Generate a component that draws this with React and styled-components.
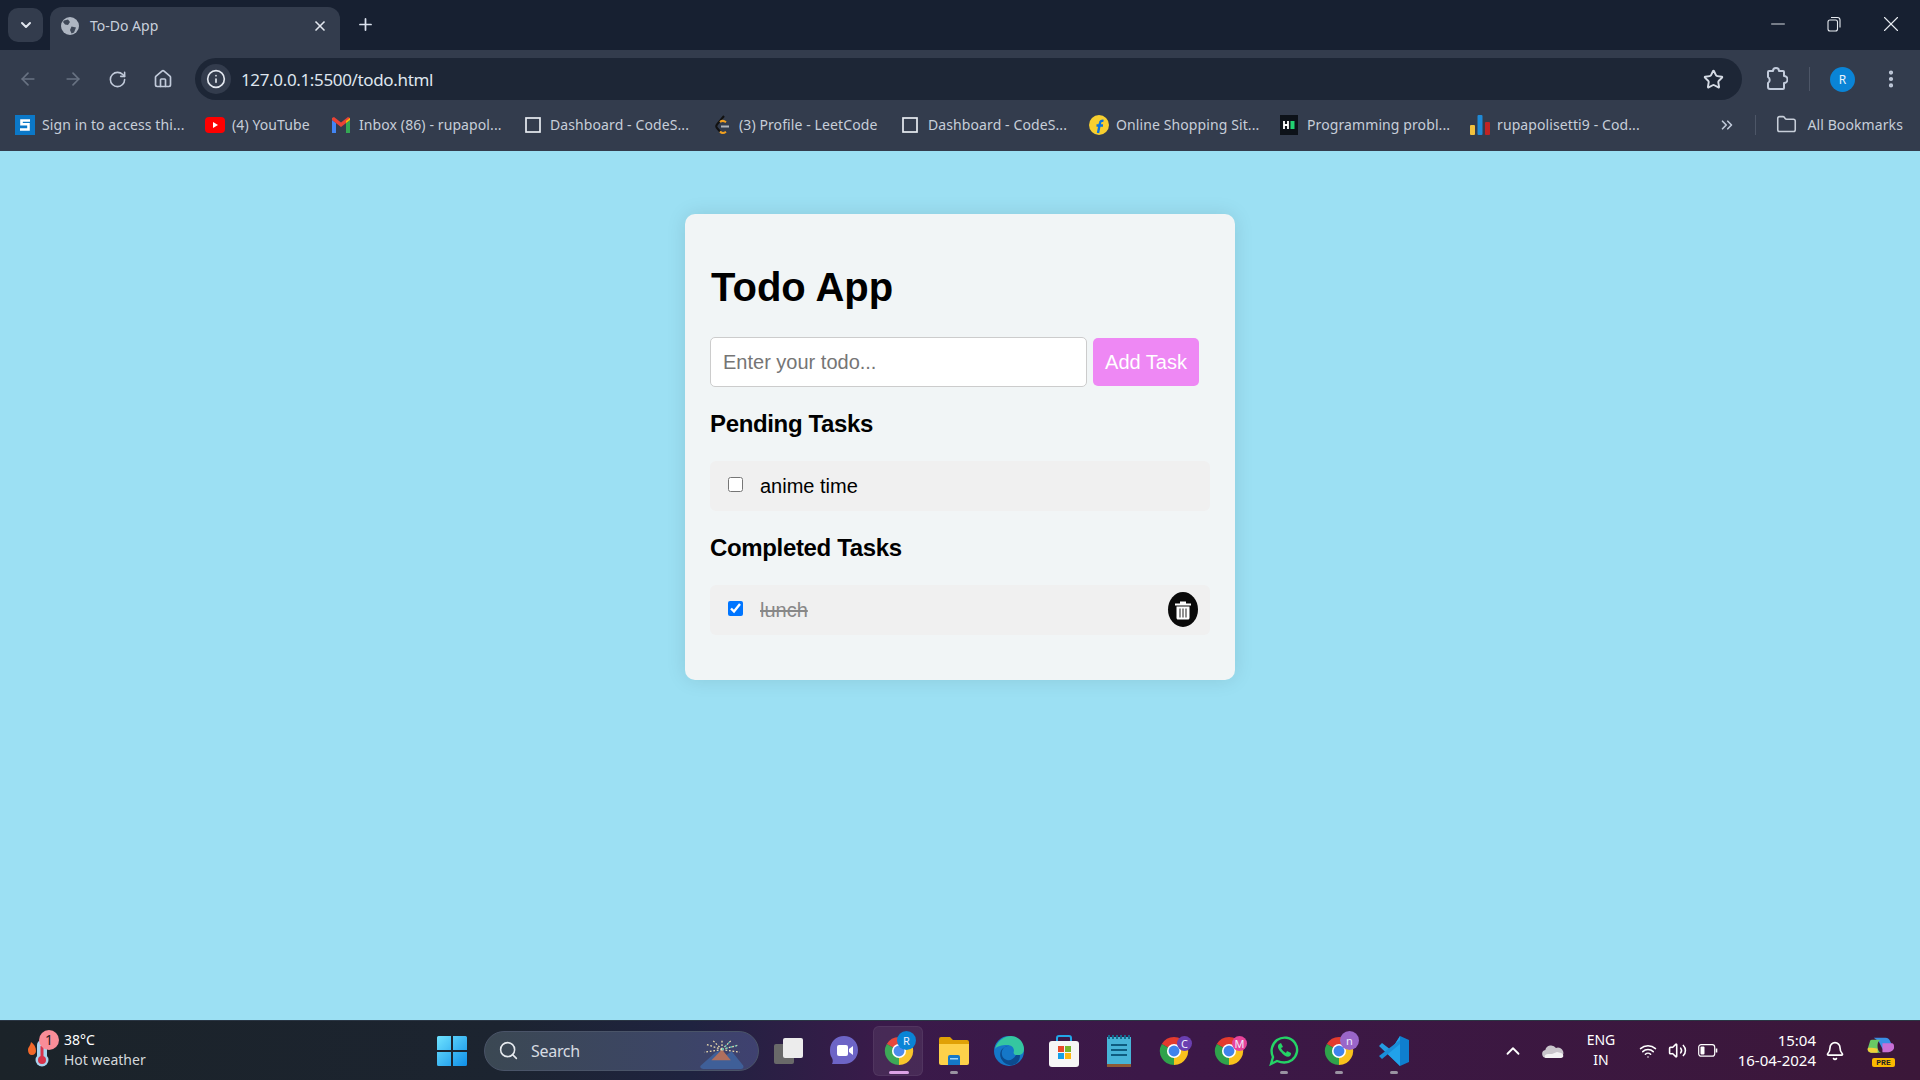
import React from "react";
import styled, { createGlobalStyle } from "styled-components";
import {
  ArrowLeft, ArrowRight, RotateCw, Home, Info, Star, MoreVertical, ChevronDown, X, Plus, Minus,
  ChevronsRight, Folder, Search, ChevronUp, Wifi, Volume2, Bell,
} from "lucide-react";

const UI = `"Noto Sans", "Open Sans", sans-serif`;

const Global = createGlobalStyle`
  html, body { margin: 0; padding: 0; width: 1920px; height: 1080px; overflow: hidden; }
  * { box-sizing: border-box; }
  body { font-family: "Liberation Sans", Arial, sans-serif; }
`;

const Screen = styled.div`display: flex; flex-direction: column; width: 1920px; height: 1080px; background: #9ce0f3;`;

/* ---------- browser chrome ---------- */
const TabStrip = styled.div`display: flex; align-items: flex-end; height: 50px; background: #172031; padding-left: 8px; color: #dbe2ee;`;
const TabSearch = styled.div`display: flex; align-items: center; justify-content: center; width: 35px; height: 34px; margin: 0 7px 8px 0; border-radius: 10px; background: #333c4d;`;
const Tab = styled.div`display: flex; align-items: center; width: 290px; height: 43px; padding: 0 12px 6px 11px; background: #333c4d; border-radius: 12px 12px 0 0;`;
const TabTitle = styled.span`flex: 1; margin-left: 11px; font: 14px ${UI}; color: #c8d0dc;`;
const NewTab = styled.div`display: flex; align-items: center; justify-content: center; width: 24px; margin: 0 0 14px 13px; height: 24px;`;
const WindowControls = styled.div`display: flex; margin: 0 0 14px auto; height: 24px; align-items: center;`;
const WindowButton = styled.div`display: flex; justify-content: center; width: ${p => p.$w || 56}px;`;

const Toolbar = styled.div`display: flex; align-items: flex-start; height: 50px; background: #333c4d; padding-top: 8px; color: #c2cbdb;`;
const NavButton = styled.div`display: flex; align-items: center; justify-content: center; width: 45px; height: 42px; color: ${p => (p.$dim ? "#687282" : "#c2cbdb")};`;
const NavGroup = styled.div`display: flex; padding: 0 10px 0 5px;`;
const Omnibox = styled.div`display: flex; align-items: center; width: 1547px; height: 42px; padding: 0 18px 0 6px; border-radius: 21px; background: #1d2636;`;
const SiteInfo = styled.div`display: flex; align-items: center; justify-content: center; width: 30px; height: 30px; border-radius: 50%; background: #333c4d; color: #e2e7ef;`;
const Url = styled.span`flex: 1; margin-left: 10px; font: 17px ${UI}; letter-spacing: -0.35px; color: #dfe5ee;`;
const ToolRight = styled.div`display: flex; align-items: center; height: 42px; margin-left: 22px;`;
const ToolDivider = styled.div`width: 1px; height: 24px; margin: 0 20px 0 21px; background: #4d5667;`;
const Avatar = styled.div`display: flex; align-items: center; justify-content: center; width: 25px; height: 25px; border-radius: 50%; background: #0a84d6; font: 12px ${UI}; color: #e9f4fc;`;
const MenuButton = styled.div`display: flex; margin-left: 25px;`;

const BookmarkBar = styled.div`display: flex; align-items: center; height: 51px; padding: 0 17px 2px 15px; background: #333c4d; color: #c7ced9;`;
const Bookmark = styled.div`display: flex; align-items: center; flex: none; width: ${p => p.$w}px;`;
const BookmarkLabel = styled.span`margin-left: ${p => p.$gap || 7}px; font: 14px ${UI}; letter-spacing: 0.1px; white-space: nowrap;`;
const BarDivider = styled.div`width: 1px; height: 20px; margin: 0 20px 0 19px; background: #4d5667;`;
const Overflow = styled.div`display: flex; margin-left: auto; color: #c2cbdb;`;
const AllMarks = styled.div`display: flex; align-items: center; color: #c7ced9;`;

/* ---------- page ---------- */
const Page = styled.main`flex: 1; display: flex; flex-direction: column; align-items: center; padding-top: 63px;`;
const Card = styled.section`width: 550px; height: 466px; padding: 25px; background: #f1f5f6; border-radius: 10px; box-shadow: 0 0 20px rgba(0, 0, 0, 0.1);`;
const Title = styled.h1`margin: 25px 0 27px 1px; font-size: 40px; line-height: 46px; font-weight: 700; color: #000;`;
const Form = styled.div`display: flex; align-items: center; gap: 6px;`;
const TodoInput = styled.input`
  width: 377px; height: 50px; padding: 0 12px; font: 20px "Liberation Sans", Arial, sans-serif;
  border: 1px solid #ccc; border-radius: 5px; background: #fff; outline: none;
  &::placeholder { color: #757575; }
`;
const AddButton = styled.button`width: 106px; height: 48px; padding: 0; font: 20px "Liberation Sans", Arial, sans-serif; color: #fff; background: #ee88f4; border: none; border-radius: 5px;`;
const SectionTitle = styled.h2`margin: ${p => p.$top}px 0 ${p => p.$bottom}px; font-size: 24px; line-height: 28px; font-weight: 700; letter-spacing: -0.35px; color: #000;`;
const TaskRow = styled.div`display: flex; align-items: center; height: 50px; padding: 0 12px 0 18px; background: #f0f0f0; border-radius: 6px;`;
const Check = styled.input`width: 15px; height: 15px; margin: 0 0 3px 0; flex: none;`;
const TaskText = styled.span`flex: 1; margin-left: 17px; font-size: 20px; color: ${p => (p.$done ? "#888" : "#000")}; text-decoration: ${p => (p.$done ? "line-through" : "none")};`;
const TrashButton = styled.button`display: flex; align-items: center; justify-content: center; width: 30px; height: 35px; margin-bottom: 1px; padding: 0; background: #0a0a0a; border: none; border-radius: 50%;`;

/* ---------- taskbar ---------- */
const Taskbar = styled.footer`display: flex; align-items: center; height: 60px; padding-right: 20px; border-top: 1px solid #2a3644; background: linear-gradient(90deg, #1b2329 0%, #1c2430 26%, #1f2340 36%, #3a1a4a 46%, #3c1848 60%, #3b1739 100%); color: #fff;`;
const Weather = styled.div`display: flex; align-items: center; flex: none; width: 424px; padding-left: 25px;`;
const ThermoBox = styled.div`display: flex; margin-bottom: 3px;`;
const WeatherText = styled.div`display: flex; flex-direction: column; margin: 0 0 2px -1px; font: 14px/20px ${UI};`;
const WeatherSub = styled.span`color: #d4d8db;`;
const TaskTile = styled.div`position: relative; display: flex; align-items: center; justify-content: center; flex: none; width: ${p => p.$w || 55}px; height: 50px; border-radius: 6px;`;
const ActiveBack = styled.div`position: absolute; left: 2px; right: 3px; top: 0; bottom: 0; border-radius: 6px; background: rgba(255,255,255,.07); border: 1px solid rgba(255,255,255,.06);`;
const SearchPill = styled.div`display: flex; align-items: center; flex: none; width: 275px; height: 40px; margin: 0 3px 0 5px; padding: 0 11px 0 13px; border-radius: 20px; background: linear-gradient(90deg, #3b4853, #3c4566 70%, #3f4170); border: 1px solid #4a5468;`;
const SearchLabel = styled.span`flex: 1; margin-left: 12px; font: 16px ${UI}; letter-spacing: -0.3px; color: #d7dce2;`;
const SparkleBox = styled.div`display: flex; align-self: flex-end; margin-bottom: 1px;`;
const Dot = styled.span`position: absolute; bottom: 2px; left: 50%; width: ${p => (p.$active ? 20 : 8)}px; height: 3px; margin-left: ${p => (p.$active ? -10 : -4)}px; border-radius: 2px; background: ${p => (p.$active ? "#dca2e6" : "#9a93a2")};`;
const Badge = styled.span`position: absolute; display: flex; align-items: center; justify-content: center; left: ${p => p.$l}px; top: ${p => p.$t}px; width: ${p => p.$s}px; height: ${p => p.$s}px; border-radius: 50%; background: ${p => p.$bg}; font: 11px ${UI}; color: #eef;`;
const Tray = styled.div`display: flex; align-items: center; margin-left: auto; height: 100%;`;
const TrayItem = styled.div`display: flex; align-items: center; justify-content: center; flex: none; width: ${p => p.$w}px; margin-left: ${p => p.$ml || 0}px;`;
const TrayStack = styled.div`display: flex; flex-direction: column; align-items: ${p => p.$align}; width: ${p => p.$w}px; margin: 0 0 2px ${p => p.$ml || 0}px; font: ${p => p.$size || 14}px/20px ${UI}; color: #fff;`;
const PreTag = styled.span`position: absolute; left: 9px; top: 28px; width: 23px; height: 9px; background: #fbb900; border-radius: 2px; font: 700 8px/9px "Liberation Mono", monospace; color: #222; text-align: center;`;
const CopilotWrap = styled.div`position: relative; display: flex; justify-content: center; align-items: flex-start; width: 34px; height: 42px; padding-top: 7px;`;

/* ---------- drawings ---------- */
const Globe = () => (
  <svg width="18" height="18" viewBox="0 0 18 18"><circle cx="9" cy="9" r="9" fill="#aeb6c2"/><path d="M3 3.5 7 2.5 9 5 7 8 4 7.5 2 5ZM10.5 9.5 15 10.5 13 15.5 10.5 16.5 9 13Z" fill="#3f4858"/></svg>
);
const SLogo = () => (
  <svg width="20" height="20" viewBox="0 0 20 20"><rect width="20" height="20" fill="#0b78c8"/><path d="M15 5.5H6.5V9.3H13.5V14.5H5" fill="none" stroke="#fff" strokeWidth="2.6"/></svg>
);
const YouTube = () => (
  <svg width="20" height="16" viewBox="0 0 20 16"><rect width="20" height="16" rx="4" fill="#f00"/><path d="M8 5v6l5-3z" fill="#fff"/></svg>
);
const Gmail = () => (
  <svg width="18" height="16" viewBox="0 0 18 16"><path d="M0 3v13h4V6z" fill="#4285f4"/><path d="M18 3v13h-4V6z" fill="#34a853"/><path d="M0 3 9 10l9-7V1l-2-1-7 5.5L2 0 0 1z" fill="#ea4335"/><path d="M14 6v-2l4-3v2z" fill="#fbbc04"/></svg>
);
const BlankPage = () => (
  <svg width="16" height="16" viewBox="0 0 16 16"><rect x="1" y="1" width="14" height="14" fill="none" stroke="#e8ecf1" strokeWidth="1.7"/></svg>
);
const Leet = () => (
  <svg width="18" height="20" viewBox="0 0 18 20"><path d="M11 1 4 9.5c-1 1.2-1 2.4 0 3.5l3 3.5" fill="none" stroke="#111" strokeWidth="2"/><path d="M7 16.5c1.5 1.7 4 1.7 6 .2" fill="none" stroke="#f0a020" strokeWidth="2"/><path d="M7 7c1.5-1.3 4-1.4 6 .2" fill="none" stroke="#f0a020" strokeWidth="2"/><path d="M8 11.5h8" stroke="#b0b4ba" strokeWidth="2"/></svg>
);
const Flipkart = () => (
  <svg width="20" height="20" viewBox="0 0 20 20"><circle cx="10" cy="10" r="10" fill="#f7cf2f"/><path d="M9 18 11 8c.3-2 1.6-2.6 3.5-2.2M7.5 10.5H14" fill="none" stroke="#0a72de" strokeWidth="2.4"/></svg>
);
const HackerRank = () => (
  <svg width="18" height="20" viewBox="0 0 18 20"><rect width="18" height="20" fill="#0d1219"/><path d="M4 6v8M8 6v8M4 10h4" stroke="#fff" strokeWidth="1.8"/><rect x="10.5" y="6" width="4" height="8" fill="#22d172"/></svg>
);
const Bars = () => (
  <svg width="20" height="20" viewBox="0 0 20 20"><rect y="10" width="5" height="10" rx="1" fill="#f2c13d"/><rect x="7.5" width="5" height="20" rx="1" fill="#1f8ad6"/><rect x="15" y="7" width="5" height="13" rx="1" fill="#c02424"/></svg>
);
const Restore = () => (
  <svg width="14" height="16" viewBox="0 0 14 16" fill="none" stroke="#e8ecf1" strokeWidth="1.1"><rect x="1" y="4" width="9.5" height="11" rx="2"/><path d="M4 1.5h6.5c1.400 0 2.500 1 2.500 2.500v7.500"/></svg>
);
const Extension = () => (
  <svg width="24" height="26" viewBox="0 0 24 26" fill="none" stroke="#c2cbdb" strokeWidth="2" strokeLinejoin="round"><path d="M5 5h4a3 3 0 0 1 6 0h4a1 1 0 0 1 1 1v4a3.500 3.500 0 0 1 0 7v5a1 1 0 0 1-1 1H6a2 2 0 0 1-2-2v-4a3.500 3.500 0 0 0 0-6V6a1 1 0 0 1 1-1z"/></svg>
);
const Trash = () => (
  <svg width="18" height="20" viewBox="0 0 18 20"><path d="M1 3.500h16v2H1zM6 1.500h6v2H6zM2.500 6.500h13V18c0 .9-.7 1.500-1.500 1.500H4c-.8 0-1.500-.6-1.500-1.500z" fill="#fff"/><path d="M6 8.500v9M9 8.500v9M12 8.500v9" stroke="#333" strokeWidth="1.100"/></svg>
);
const Thermo = () => (
  <svg width="40" height="38" viewBox="0 0 40 38">
    <path d="M3 20c0-3 2.500-4 3-8 3 2 5 5 5 9 0 2-1.500 4-4 4s-4-2-4-5z" fill="#f2682a"/>
    <rect x="12" y="10" width="10" height="24" rx="5" fill="#a9d3ee"/>
    <circle cx="17" cy="30" r="6.500" fill="#a9d3ee"/>
    <circle cx="17" cy="30" r="4" fill="#d8324a"/>
    <rect x="15.500" y="16" width="3" height="14" fill="#d8324a"/>
    <circle cx="24" cy="10" r="10" fill="#f98d98"/>
    <text x="24" y="15" textAnchor="middle" fontSize="14" fontFamily="Noto Sans" fill="#2b1a1e">1</text>
  </svg>
);
const WinLogo = () => (
  <svg width="30" height="30" viewBox="0 0 30 30">
    <defs><linearGradient id="win" x1="0" y1="0" x2="1" y2="1"><stop offset="0" stopColor="#6fe3ff"/><stop offset="1" stopColor="#0f8fe8"/></linearGradient></defs>
    <path d="M0 1.500A1.500 1.500 0 0 1 1.500 0H14v14H0zM16 0h12.500A1.500 1.500 0 0 1 30 1.500V14H16zM0 16h14v14H1.500A1.500 1.500 0 0 1 0 28.500zM16 16h14v12.500a1.500 1.500 0 0 1-1.500 1.500H16z" fill="url(#win)"/>
  </svg>
);
const Sparkle = () => (
  <svg width="50" height="30" viewBox="0 0 52 34">
    <path d="M2 30 18 16c3-3 6-3 9-1l4 3 6-4 13 16c1 2 0 4-3 4H6c-3 0-6-2-4-4z" fill="#3f5f98"/>
    <path d="M14 24 26 12 36 24z" fill="#b06f5d"/>
    <path d="M26 12 8 6M26 12 16 2M26 12 26 0M26 12 36 2M26 12 44 7M26 12 46 15M26 12 6 15" stroke="#ecdcae" strokeWidth="1.500" strokeDasharray="2 2"/>
    <path d="M26 12 36 2M26 12 44 7" stroke="#58c4b5" strokeWidth="1.500" strokeDasharray="2 3"/>
  </svg>
);
const TaskView = () => (
  <svg width="30" height="30" viewBox="0 0 30 30"><rect x="0" y="8" width="20" height="20" rx="2" fill="#696969"/><rect x="9" y="2" width="20" height="20" rx="2" fill="#ececec"/></svg>
);
const Teams = () => (
  <svg width="30" height="32" viewBox="0 0 30 32"><path d="M15 1C23 1 29 7 29 15S23 29 15 29H3c1-2 1-4 0-6C1 20 1 18 1 15 1 7 7 1 15 1z" fill="#6d64c6"/><rect x="8" y="10" width="11" height="11" rx="2" fill="#fff"/><path d="M20 14l4-3v9l-4-3z" fill="#fff"/></svg>
);
const Chrome = () => (
  <svg width="30" height="30" viewBox="0 0 32 32">
    <path d="M16 16 3 8.500A15 15 0 0 1 29 8.500z" fill="#e33b2e"/>
    <path d="M16 16 29 8.500A15 15 0 0 1 16 31z" fill="#f8c11c"/>
    <path d="M16 16 16 31A15 15 0 0 1 3 8.500z" fill="#2fa24b"/>
    <circle cx="16" cy="16" r="7.500" fill="#fff"/><circle cx="16" cy="16" r="5.800" fill="#3f83ec"/>
  </svg>
);
const Explorer = () => (
  <svg width="30" height="28" viewBox="0 0 30 28"><path d="M0 2a2 2 0 0 1 2-2h9l3 3h14a2 2 0 0 1 2 2v3H0z" fill="#e0a106"/><path d="M0 7h30v19a2 2 0 0 1-2 2H2a2 2 0 0 1-2-2z" fill="#fdd14a"/><path d="M9 20a2 2 0 0 1 2-2h8a2 2 0 0 1 2 2v8H9z" fill="#1478c8"/><rect x="11" y="21" width="8" height="1.500" fill="#9fd6f7"/></svg>
);
const Edge = () => (
  <svg width="30" height="30" viewBox="0 0 30 30"><circle cx="15" cy="15" r="15" fill="#1577c8"/><path d="M1 13C3 4 11 0 17 0c7 0 13 6 13 13 0 5-4 7-8 6-2 0-3-2-2-4 0-4-3-6-7-6C8 9 3 10 1 13z" fill="#35c6a0"/><path d="M22 19c-2 4-6 6-9 5-4-1-6-5-5-9 1-3 3-5 6-5-7 1-10 8-6 14 3 5 10 7 15 3 2-2 3-5 3-8-1 0-2 0-4 0z" fill="#0c4b8e"/></svg>
);
const Store = () => (
  <svg width="30" height="32" viewBox="0 0 30 32"><path d="M8 7V3a2 2 0 0 1 2-2h10a2 2 0 0 1 2 2v4" fill="none" stroke="#22a6e8" strokeWidth="2"/><rect y="6" width="30" height="26" rx="3" fill="#f6f6f6"/><rect x="9" y="11" width="6" height="6" fill="#e84a2b"/><rect x="16" y="11" width="6" height="6" fill="#78b52d"/><rect x="9" y="18" width="6" height="6" fill="#14a0e8"/><rect x="16" y="18" width="6" height="6" fill="#fdb813"/></svg>
);
const Notepad = () => (
  <svg width="24" height="32" viewBox="0 0 24 32"><rect y="2" width="24" height="27" fill="#47b4d8"/><path d="M2 0v4M6 0v4M10 0v4M14 0v4M18 0v4M22 0v4" stroke="#136a8e" strokeWidth="2"/><path d="M4 10h16M4 15h16M4 20h16" stroke="#0e5d80" strokeWidth="2"/><rect y="29" width="24" height="3" fill="#8d5a35"/></svg>
);
const WhatsApp = () => (
  <svg width="30" height="30" viewBox="0 0 30 30"><path d="M2 28l2-7C1 15 3 8 8 4c6-4 14-3 18 3 4 6 2 13-3 17-4 3-10 3-15 1z" fill="none" stroke="#25d366" strokeWidth="2.400"/><path d="M10 8c-2 2-1 5 2 8 3 4 7 6 9 4 1-1 1-2 1-3l-4-2-1 2c-2-1-4-3-5-5l2-1-2-4z" fill="#25d366"/></svg>
);
const VsCode = () => (
  <svg width="30" height="30" viewBox="0 0 30 30"><path d="M21 0 30 4v22l-9 4L8 17l5-4z" fill="#0f7fcf"/><path d="M21 0v30L0 10l3-3 9 7z" fill="#23a4ec" opacity=".95"/><path d="M0 20l3 3 18-15V4z" fill="#1a8ed9"/></svg>
);
const CloudIcon = () => (
  <svg width="22" height="14" viewBox="0 0 22 14"><path d="M4 14a4 4 0 0 1-.7-7.900A6 6 0 0 1 14 4a4.500 4.500 0 0 1 4 10z" fill="#c9c5cb"/><path d="M4 14h15c3 0 3-4 0-5l-4-1-5 2-4 0c-4 0-4 4-2 4z" fill="#f3f2f3"/></svg>
);
const Battery = () => (
  <svg width="20" height="13" viewBox="0 0 20 13"><rect x=".7" y=".7" width="16" height="11.500" rx="2.500" fill="none" stroke="#fff" strokeWidth="1.200"/><rect x="2.500" y="2.500" width="4" height="8" rx="1" fill="#fff"/><path d="M18.500 4.500v4" stroke="#fff" strokeWidth="1.600"/></svg>
);
const Copilot = () => (
  <svg width="29" height="22" viewBox="0 0 30 32" preserveAspectRatio="none">
    <path d="M8 1h12c3 0 4 2 5 5l4 11H17L13 6 8 1z" fill="#3a8fe6"/>
    <path d="M17 9h9c3 0 3 3 3 6 0 4-3 7-6 7h-6z" fill="#c86fd6"/>
    <path d="M6 4h9c-3 3-3 6-3 10 0 3 1 8 4 9H7c-4 0-6-3-5-7l2-9c0-2 1-3 2-3z" fill="#69c864"/>
    <path d="M2 16c2-1 6 0 10 1v6H7c-4 0-6-3-5-7z" fill="#f0cf3a"/>
  </svg>
);

const marks = [
  { w: 190, icon: <SLogo />, label: "Sign in to access thi..." },
  { w: 127, icon: <YouTube />, label: "(4) YouTube" },
  { w: 193, icon: <Gmail />, label: "Inbox (86) - rupapol...", gap: 9 },
  { w: 188, icon: <BlankPage />, label: "Dashboard - CodeS...", gap: 9 },
  { w: 189, icon: <Leet />, label: "(3) Profile - LeetCode", gap: 8 },
  { w: 187, icon: <BlankPage />, label: "Dashboard - CodeS...", gap: 10 },
  { w: 191, icon: <Flipkart />, label: "Online Shopping Sit..." },
  { w: 190, icon: <HackerRank />, label: "Programming probl...", gap: 9 },
  { w: 200, icon: <Bars />, label: "rupapolisetti9 - Cod...", gap: 7 },
];

export default function App() {
  return (
    <Screen>
      <Global />
      <TabStrip>
        <TabSearch><ChevronDown size={16} strokeWidth={3} color="#e2e7ef" /></TabSearch>
        <Tab>
          <Globe />
          <TabTitle>To-Do App</TabTitle>
          <X size={16} strokeWidth={2.5} color="#e2e7ef" />
        </Tab>
        <NewTab><Plus size={19} strokeWidth={2.2} color="#dbe2ee" /></NewTab>
        <WindowControls>
          <WindowButton><Minus size={22} strokeWidth={1} color="#e8ecf1" /></WindowButton>
          <WindowButton><Restore /></WindowButton>
          <WindowButton $w={58}><X size={26} strokeWidth={1} color="#e8ecf1" /></WindowButton>
        </WindowControls>
      </TabStrip>

      <Toolbar>
        <NavGroup>
          <NavButton $dim><ArrowLeft size={20} /></NavButton>
          <NavButton $dim><ArrowRight size={20} /></NavButton>
          <NavButton><RotateCw size={19} /></NavButton>
          <NavButton><Home size={20} /></NavButton>
        </NavGroup>
        <Omnibox>
          <SiteInfo><Info size={20} /></SiteInfo>
          <Url>127.0.0.1:5500/todo.html</Url>
          <Star size={21} strokeWidth={2.2} color="#d5dbe5" />
        </Omnibox>
        <ToolRight>
          <Extension />
          <ToolDivider />
          <Avatar>R</Avatar>
          <MenuButton><MoreVertical size={22} strokeWidth={2.6} /></MenuButton>
        </ToolRight>
      </Toolbar>

      <BookmarkBar>
        {marks.map(m => (
          <Bookmark key={m.w + m.label} $w={m.w}>
            {m.icon}
            <BookmarkLabel $gap={m.gap}>{m.label}</BookmarkLabel>
          </Bookmark>
        ))}
        <Overflow><ChevronsRight size={18} strokeWidth={2.2} /></Overflow>
        <BarDivider />
        <AllMarks>
          <Folder size={21} strokeWidth={1.8} />
          <BookmarkLabel $gap={10}>All Bookmarks</BookmarkLabel>
        </AllMarks>
      </BookmarkBar>

      <Page>
        <Card>
          <Title>Todo App</Title>
          <Form>
            <TodoInput placeholder="Enter your todo..." readOnly />
            <AddButton>Add Task</AddButton>
          </Form>
          <SectionTitle $top={23} $bottom={23}>Pending Tasks</SectionTitle>
          <TaskRow>
            <Check type="checkbox" readOnly />
            <TaskText>anime time</TaskText>
          </TaskRow>
          <SectionTitle $top={23} $bottom={23}>Completed Tasks</SectionTitle>
          <TaskRow>
            <Check type="checkbox" checked readOnly />
            <TaskText $done>lunch</TaskText>
            <TrashButton><Trash /></TrashButton>
          </TaskRow>
        </Card>
      </Page>

      <Taskbar>
        <Weather>
          <ThermoBox><Thermo /></ThermoBox>
          <WeatherText>
            <span>38°C</span>
            <WeatherSub>Hot weather</WeatherSub>
          </WeatherText>
        </Weather>
        <TaskTile><WinLogo /></TaskTile>
        <SearchPill>
          <Search size={21} strokeWidth={1.8} color="#e6eaef" />
          <SearchLabel>Search</SearchLabel>
          <SparkleBox><Sparkle /></SparkleBox>
        </SearchPill>
        <TaskTile $w={54}><TaskView /></TaskTile>
        <TaskTile><Teams /></TaskTile>
        <TaskTile>
          <ActiveBack />
          <Chrome />
          <Badge $l={26} $t={5} $s={19} $bg="#0a84d6">R</Badge>
          <Dot $active />
        </TaskTile>
        <TaskTile><Explorer /><Dot /></TaskTile>
        <TaskTile><Edge /></TaskTile>
        <TaskTile><Store /></TaskTile>
        <TaskTile><Notepad /></TaskTile>
        <TaskTile><Chrome /><Badge $l={31} $t={10} $s={15} $bg="#6a3fb0">C</Badge></TaskTile>
        <TaskTile><Chrome /><Badge $l={31} $t={10} $s={15} $bg="#e8449a">M</Badge></TaskTile>
        <TaskTile><WhatsApp /><Dot /></TaskTile>
        <TaskTile><Chrome /><Badge $l={29} $t={5} $s={19} $bg="#9a66c8">n</Badge><Dot /></TaskTile>
        <TaskTile><VsCode /><Dot /></TaskTile>
        <Tray>
          <TrayItem $w={40}><ChevronUp size={22} strokeWidth={2} /></TrayItem>
          <TrayItem $w={40}><CloudIcon /></TrayItem>
          <TrayStack $w={52} $ml={2} $align="center"><span>ENG</span><span>IN</span></TrayStack>
          <TrayItem $w={28} $ml={7}><Wifi size={18} /></TrayItem>
          <TrayItem $w={29} $ml={1}><Volume2 size={19} /></TrayItem>
          <TrayItem $w={30} $ml={1}><Battery /></TrayItem>
          <TrayStack $w={93} $size={15} $align="flex-end"><span>15:04</span><span>16-04-2024</span></TrayStack>
          <TrayItem $w={30} $ml={4}><Bell size={20} /></TrayItem>
          <TrayItem $w={40} $ml={10}>
            <CopilotWrap><Copilot /><PreTag>PRE</PreTag></CopilotWrap>
          </TrayItem>
        </Tray>
      </Taskbar>
    </Screen>
  );
}
